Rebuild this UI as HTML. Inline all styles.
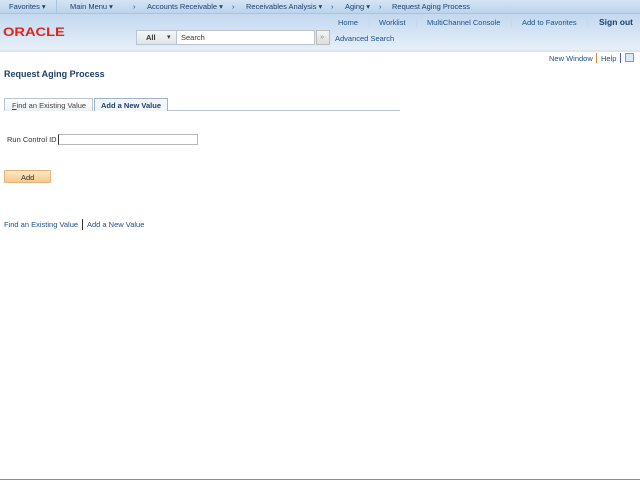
<!DOCTYPE html>
<html><head><meta charset="utf-8"><style>
*{margin:0;padding:0;box-sizing:border-box}
body{width:640px;height:480px;position:relative;background:#fff;font-family:"Liberation Sans",Arial,sans-serif;font-size:7.5px;color:#333;overflow:hidden}
.a{position:absolute;white-space:nowrap}
#top{position:absolute;left:0;top:0;width:640px;height:14px;background:linear-gradient(#d4e4f4,#bcd3ec);border-bottom:1px solid #a9c3e0}
#hdr{position:absolute;left:0;top:14px;width:640px;height:36px;background:linear-gradient(#c3d8ef,#e6eff9)}
#line{position:absolute;left:0;top:50px;width:640px;height:2px;background:#dde5ee}
.nav{color:#1d3f6a;font-size:7.5px}
.lnk{color:#1d4f8a;font-size:7.5px}
.sep{position:absolute;width:1px;background:#c8d8ea}
</style></head><body>
<div id="top"></div>
<div id="hdr"></div>
<div id="line"></div>
<div class="sep" style="left:56px;top:0;height:14px;background:#a9c3e0"></div>
<span class="a nav" style="left:9px;top:2px">Favorites ▾</span>
<span class="a nav" style="left:70px;top:2px">Main Menu ▾</span>
<span class="a nav" style="left:133px;top:2px">›</span>
<span class="a nav" style="left:147px;top:2px">Accounts Receivable ▾</span>
<span class="a nav" style="left:232px;top:2px">›</span>
<span class="a nav" style="left:246px;top:2px">Receivables Analysis ▾</span>
<span class="a nav" style="left:331px;top:2px">›</span>
<span class="a nav" style="left:345px;top:2px">Aging ▾</span>
<span class="a nav" style="left:379px;top:2px">›</span>
<span class="a nav" style="left:392px;top:2px">Request Aging Process</span>

<span class="a lnk" style="left:338px;top:18px">Home</span>
<div class="sep" style="left:369px;top:17px;height:10px"></div>
<span class="a lnk" style="left:379px;top:18px">Worklist</span>
<div class="sep" style="left:416px;top:17px;height:10px"></div>
<span class="a lnk" style="left:427px;top:18px">MultiChannel Console</span>
<div class="sep" style="left:511px;top:17px;height:10px"></div>
<span class="a lnk" style="left:522px;top:18px">Add to Favorites</span>
<div class="sep" style="left:587px;top:17px;height:10px"></div>
<span class="a" style="left:599px;top:17px;font-size:8.5px;font-weight:bold;color:#1d3f6a">Sign out</span>

<span class="a" style="left:3px;top:25px;font-size:12px;color:#e2231a;font-weight:bold;transform:scaleX(1.22);transform-origin:left">ORACLE</span>

<div class="a" style="left:136px;top:30px;width:41px;height:15px;background:linear-gradient(#f4f6f8,#dfe5ea);border:1px solid #b9c4cf"><span class="a" style="left:9px;top:2px;font-weight:bold;color:#333">All</span><span class="a" style="left:30px;top:2px;font-size:7px">▾</span></div>
<div class="a" style="left:177px;top:30px;width:138px;height:15px;background:#fff;border:1px solid #b9c4cf;border-left:none"><span class="a" style="left:4px;top:2px;color:#333">Search</span></div>
<div class="a" style="left:316px;top:30px;width:14px;height:15px;background:linear-gradient(#f4f4f4,#ddd);border:1px solid #bbb"><span class="a" style="left:3px;top:1px;color:#888">»</span></div>
<span class="a lnk" style="left:335px;top:34px">Advanced Search</span>

<span class="a lnk" style="left:549px;top:54px">New Window</span>
<div class="sep" style="left:596px;top:53px;height:10px;background:#d58a3a"></div>
<span class="a lnk" style="left:601px;top:54px">Help</span>
<div class="sep" style="left:620px;top:53px;height:10px;background:#5060a0"></div>
<div class="a" style="left:625px;top:53px;width:9px;height:9px;border:1px solid #7a9cc6;background:#dce8f5"></div>

<span class="a" style="left:4px;top:69px;font-size:9px;font-weight:bold;color:#1d3f6a">Request Aging Process</span>

<div class="a" style="left:4px;top:98px;width:89px;height:13px;background:linear-gradient(#fff,#eef1f4);border:1px solid #b9c4cf;border-bottom:none"><span class="a" style="left:7px;top:2px;color:#444"><u>F</u>ind an Existing Value</span></div>
<div class="a" style="left:94px;top:98px;width:74px;height:13px;background:#f2f6fa;border:1px solid #9db4cf;border-bottom:none"><span class="a" style="left:6px;top:2px;font-weight:bold;color:#1d3f6a">Add a New Value</span></div>
<div class="a" style="left:168px;top:110px;width:232px;height:1px;background:#b9c4cf"></div>

<span class="a" style="left:7px;top:135px;color:#333">Run Control ID</span>
<div class="a" style="left:58px;top:134px;width:140px;height:11px;border:1px solid #b8b8b8;border-left:1px solid #333"></div>

<div class="a" style="left:4px;top:170px;width:47px;height:13px;background:linear-gradient(#fde7c8,#f5c98c);border:1px solid #e5b47a;border-radius:1px"><span class="a" style="left:16px;top:2px;color:#333">Add</span></div>

<span class="a lnk" style="left:4px;top:220px">Find an Existing Value</span>
<div class="sep" style="left:82px;top:219px;height:11px;background:#333"></div>
<span class="a lnk" style="left:87px;top:220px">Add a New Value</span>

<div class="a" style="left:0;top:479px;width:640px;height:1px;background:#8a9298"></div>
</body></html>
